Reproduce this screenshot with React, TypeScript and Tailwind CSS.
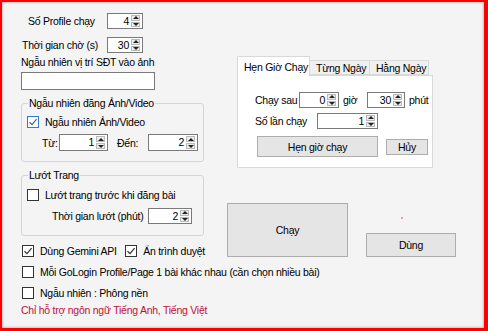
import React from 'react';

const Spin: React.FC<{ value: string; className?: string }> = ({ value, className = '' }) => (
  <div className={`flex shrink-0 border border-[#7a7a7a] bg-white ${className}`}>
    <div className="flex-1 pr-[2px] text-right leading-[14px]">{value}</div>
    <div className="my-[1px] mr-[2px] flex w-[9px] flex-col gap-[1px]">
      <div className="flex flex-1 items-center justify-center border border-[#b9b9b9] bg-[#ededed]">
        <div className="h-0 w-0 border-x-[3px] border-b-[3px] border-x-transparent border-b-[#222]" />
      </div>
      <div className="flex flex-1 items-center justify-center border border-[#b9b9b9] bg-[#ededed]">
        <div className="h-0 w-0 border-x-[3px] border-t-[3px] border-x-transparent border-t-[#222]" />
      </div>
    </div>
  </div>
);

const Check: React.FC<{ checked?: boolean; blue?: boolean }> = ({ checked, blue }) => (
  <div
    className={`flex h-[12px] w-[12px] shrink-0 items-center justify-center border bg-white ${
      blue ? 'border-[#3a7cc1]' : 'border-[#333]'
    }`}
  >
    {checked && (
      <svg width="10" height="10" viewBox="0 0 10 10">
        <path d="M1.5 5.2 L4 7.6 L8.6 2.2" fill="none" stroke={blue ? '#2b6cb4' : '#333'} strokeWidth="1.2" />
      </svg>
    )}
  </div>
);

const Btn: React.FC<{ children: React.ReactNode; className?: string }> = ({ children, className = '' }) => (
  <div className={`flex shrink-0 items-center justify-center border border-[#adadad] bg-[#e5e5e5] ${className}`}>
    {children}
  </div>
);

export default function App() {
  return (
    <div className="h-[331px] w-[488px] bg-[#ff0000] pb-[3px] pl-[2px] pr-[4px] pt-[2px]">
      <div className="h-full w-full whitespace-nowrap bg-[#f4f4f4] font-['Liberation_Sans',Arial,sans-serif] text-[10.5px] leading-[14px] tracking-[-0.25px] text-black shadow-[inset_0_0_3px_rgba(0,0,0,0.4)]">
        <div className="flex pt-[11px]">
          {/* left column */}
          <div className="ml-[19px] flex w-[184px] flex-col">
            <div className="flex h-[16px] items-center">
              <span className="w-[86px] pl-[7px]">Số Profile chạy</span>
              <Spin value="4" className="h-[16px] w-[36px]" />
            </div>
            <div className="mt-[8px] flex h-[16px] items-center">
              <span className="w-[86px] pl-[1px]">Thời gian chờ (s)</span>
              <Spin value="30" className="h-[16px] w-[36px]" />
            </div>
            <div className="mt-[2px] h-[14px]">Ngẫu nhiên vị trí SĐT vào ảnh</div>
            <div className="mt-[3px] h-[18px] w-[134px] border border-[#7a7a7a] bg-white" />

            <fieldset className="mt-[6px] w-[183px] rounded-[3px] border border-[#d5d5d5] pb-[10px]">
              <legend className="ml-[6px] px-[1px]">Ngẫu nhiên đăng Ảnh/Video</legend>
              <div className="mt-[5px] flex h-[13px] items-center pl-[5px]">
                <Check checked blue />
                <span className="ml-[6px]">Ngẫu nhiên Ảnh/Video</span>
              </div>
              <div className="mt-[6px] flex h-[17px] items-center pl-[20px]">
                <span className="w-[17px]">Từ:</span>
                <Spin value="1" className="h-[17px] w-[49px]" />
                <span className="ml-[9px] w-[31px]">Đến:</span>
                <Spin value="2" className="h-[17px] w-[50px]" />
              </div>
            </fieldset>

            <fieldset className="mt-[6px] w-[183px] rounded-[3px] border border-[#d5d5d5] pb-[11px]">
              <legend className="ml-[6px] px-[1px]">Lướt Trang</legend>
              <div className="mt-[6px] flex h-[13px] items-center pl-[5px]">
                <Check />
                <span className="ml-[6px]">Lướt trang trước khi đăng bài</span>
              </div>
              <div className="mt-[7px] flex h-[16px] items-center pl-[30px]">
                <span className="w-[96px]">Thời gian lướt (phút)</span>
                <Spin value="2" className="h-[16px] w-[44px]" />
              </div>
            </fieldset>

            <div className="mt-[8px] flex h-[13px] items-center pl-[1px]">
              <Check checked />
              <span className="ml-[6px] w-[87px]">Dùng Gemini API</span>
              <Check checked />
              <span className="ml-[6px]">Ẩn trình duyệt</span>
            </div>
          </div>

          {/* right column */}
          <div className="ml-[22px] flex w-[257px] flex-col">
            <div className="ml-[10px] mt-[44px] flex w-[196px] flex-col">
              <div className="flex h-[18px] items-end">
                <div className="relative z-10 mb-[-1px] flex h-[20px] w-[73px] items-center border border-b-0 border-[#d9d9d9] bg-white pl-[6px]">
                  Hẹn Giờ Chạy
                </div>
                <div className="flex h-[15px] w-[60px] items-center border border-l-0 border-[#d9d9d9] bg-[#f0f0f0] pl-[6px]">
                  Từng Ngày
                </div>
                <div className="flex h-[15px] w-[59px] items-center border border-l-0 border-[#d9d9d9] bg-[#f0f0f0] pl-[6px]">
                  Hằng Ngày
                </div>
              </div>
              <div className="h-[93px] border border-[#d9d9d9] bg-white">
                <div className="mt-[16px] flex h-[16px] items-center pl-[17px]">
                  <span className="w-[44px]">Chạy sau</span>
                  <Spin value="0" className="h-[16px] w-[40px]" />
                  <span className="ml-[4px] w-[24px]">giờ</span>
                  <Spin value="30" className="h-[16px] w-[38px]" />
                  <span className="ml-[4px]">phút</span>
                </div>
                <div className="mt-[5px] flex h-[16px] items-center pl-[17px]">
                  <span className="w-[62px]">Số lần chạy</span>
                  <Spin value="1" className="h-[16px] w-[61px]" />
                </div>
                <div className="mt-[7px] flex items-center pl-[19px]">
                  <Btn className="h-[21px] w-[121px]">Hẹn giờ chạy</Btn>
                  <Btn className="ml-[8px] h-[16px] w-[42px]">Hủy</Btn>
                </div>
              </div>
            </div>

            <div className="mt-[35px] flex h-[54px]">
              <Btn className="h-[54px] w-[121px]">Chạy</Btn>
              <div className="ml-[18px] flex w-[90px] flex-col">
                <div className="ml-[35px] mt-[14px] h-[2px] w-[2px] rounded-full bg-[#f07a7a]" />
                <Btn className="mt-auto h-[24px] w-[90px]">Dùng</Btn>
              </div>
            </div>
          </div>
        </div>

        <div className="ml-[20px] mt-[8px] flex h-[13px] items-center">
          <Check />
          <span className="ml-[6px]">Mỗi GoLogin Profile/Page 1 bài khác nhau (cần chọn nhiều bài)</span>
        </div>
        <div className="ml-[20px] mt-[8px] flex h-[13px] items-center">
          <Check />
          <span className="ml-[6px]">Ngẫu nhiên : Phông nền</span>
        </div>
        <div className="ml-[19px] mt-[4px] h-[14px] text-[#c0103a]">Chỉ hỗ trợ ngôn ngữ Tiếng Anh, Tiếng Việt</div>
      </div>
    </div>
  );
}
